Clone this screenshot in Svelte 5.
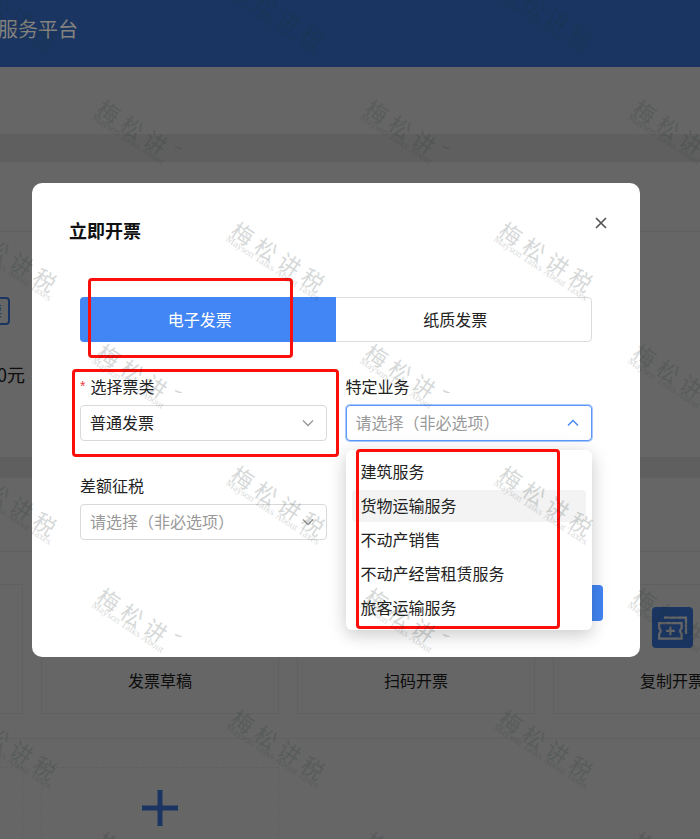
<script>
  let tab = $state('e');
  let kind = $state('普通发票');
  let business = $state('');
  let margin = $state('');

  const services = ['建筑服务', '货物运输服务', '不动产销售', '不动产经营租赁服务', '旅客运输服务'];
  const shortcuts = ['批量开票', '发票草稿', '扫码开票', '复制开票'];

  const marks = [];
  for (let row = 1; row < 9; row++) {
    for (let col = 1; col < 7; col++) {
      if ((row + col) % 2 === 0) {
        marks.push({ x: col * 134 - 162, y: row * 122 - 148, cut: row % 2 === 0 });
      }
    }
  }
</script>

{#snippet chevron(up)}
  <svg class="chevron" class:up viewBox="0 0 12 8" width="12" height="8" aria-hidden="true">
    <path d="M1 1.5 L6 6.5 L11 1.5" fill="none" stroke="currentColor" stroke-width="1.4" />
  </svg>
{/snippet}

{#snippet ticket()}
  <svg viewBox="0 0 41 41" width="41" height="41" aria-hidden="true">
    <g fill="none" stroke="currentColor" stroke-width="2.2">
      <path d="M12 10.6 H34 V27" />
      <path d="M7.2 16.2 H29.6 V21.2 Q26.6 24 29.6 26.8 V31.6 H7.2 V26.8 Q10.2 24 7.2 21.2 Z" />
      <path d="M18.4 19.6 V28.2 M14.1 23.9 H22.7" />
    </g>
  </svg>
{/snippet}

<div class="app">
  <header><span>服务平台</span></header>
  <div class="crumbs"></div>

  <section class="summary">
    <div class="bar"></div>
    <div class="figures">
      <button class="outline">去开票</button>
      <p>0元</p>
    </div>
  </section>

  <section class="work">
    <div class="bar tall"></div>
    <div class="cards">
      {#each shortcuts as name}
        <a class="card" href="#shortcut"><span class="icon">{@render ticket()}</span>{name}</a>
      {/each}
    </div>
    <div class="cards more">
      <div class="card dashed"></div>
      <button class="card dashed" aria-label="添加">
        <svg viewBox="0 0 36 36" width="36" height="36"><path d="M18 0 V36 M0 18 H36" stroke="currentColor" stroke-width="5" /></svg>
      </button>
    </div>
  </section>

  <div class="mask">
    <div class="modal" role="dialog" aria-modal="true" aria-labelledby="dlg-title">
      <div class="head">
        <h2 id="dlg-title">立即开票</h2>
        <button class="close" aria-label="关闭">
          <svg viewBox="0 0 12 12" width="12" height="12"><path d="M1 1 L11 11 M11 1 L1 11" stroke="currentColor" stroke-width="1.7" /></svg>
        </button>
      </div>

      <div class="body">
        <div class="tabs">
          <button class:active={tab === 'e'} onclick={() => (tab = 'e')}>电子发票</button>
          <button class:active={tab === 'p'} onclick={() => (tab = 'p')}>纸质发票</button>
        </div>

        <div class="fields">
          <div class="field">
            <label for="kind"><i>*</i>选择票类</label>
            <div class="box">
              <select id="kind" bind:value={kind}>
                <option>普通发票</option>
              </select>
              {@render chevron(false)}
            </div>
          </div>
          <div class="field">
            <label for="business">特定业务</label>
            <div class="box open">
              <select id="business" class="empty" bind:value={business}>
                <option value="">请选择（非必选项）</option>
              </select>
              {@render chevron(true)}
              <div class="menu">
                {#each services as name, i}
                  <button class:hover={i === 1}>{name}</button>
                {/each}
              </div>
            </div>
          </div>
          <div class="field">
            <label for="margin">差额征税</label>
            <div class="box">
              <select id="margin" class="empty" bind:value={margin}>
                <option value="">请选择（非必选项）</option>
              </select>
              {@render chevron(false)}
            </div>
          </div>
        </div>
      </div>

      <div class="foot"><button class="primary" aria-label="确定"></button></div>

      <div class="frame f1"></div>
      <div class="frame f2"></div>
      <div class="frame f3"></div>
    </div>
  </div>

  <div class="marks" aria-hidden="true">
    {#each marks as m}
      <div class="mark" class:cut={m.cut} style="left:{m.x}px;top:{m.y}px">
        <div class="turn">
          <div class="cn"><span>梅</span><span>松</span><span>讲</span><span>税</span></div>
          <div class="en"><span>Mayson</span><span>Talks</span><span>About</span><span>Taxes</span></div>
        </div>
      </div>
    {/each}
  </div>
</div>

<style>
  :global(body) { margin: 0; }
  .app {
    position: relative;
    height: 100vh;
    overflow: hidden;
    background: #eee;
    color: #222;
    font: 16px/24px "Noto Sans CJK SC", sans-serif;
  }
  .app * { box-sizing: border-box; }
  button, select { font: inherit; color: inherit; margin: 0; padding: 0; border: 0; background: none; }
  svg { display: block; }

  header {
    display: flex;
    align-items: center;
    height: 67px;
    padding-bottom: 10px;
    background: #4285f4;
    font-size: 20px;
  }
  header span { position: relative; z-index: 2; margin-left: -2px; color: #85837d; }
  .crumbs { height: 67px; background: #fff; }

  .summary { height: 295px; margin-top: 28px; background: #fff; }
  .bar { height: 70px; border-bottom: 1px solid #f0f0f0; }
  .tall { height: 74px; }
  .figures { padding-top: 65px; margin-left: -45px; }
  .figures p { margin: 37px 0 0; width: 70px; text-align: right; font-size: 18px; }
  .outline {
    display: block;
    width: 55px;
    height: 28px;
    border: 2px solid #4285f4;
    border-radius: 4px;
    color: #4285f4;
    font-size: 13px;
  }

  .work { margin-top: 21px; background: #fff; }
  .cards { display: flex; gap: 18px; margin-left: -215px; padding: 32px 0 24px; }
  .card {
    flex: none;
    display: flex;
    flex-direction: column;
    align-items: center;
    width: 238px;
    height: 130px;
    padding-top: 22px;
    border: 1px solid #f0f0f0;
    color: #222;
    text-decoration: none;
  }
  .icon { margin-bottom: 20px; border-radius: 4px; background: #4285f4; color: #fff; }
  .more { border-top: 1px solid #f0f0f0; padding-top: 28px; }
  .dashed { border: 1px dashed #f0f0f0; color: #4285f4; }

  .mask {
    position: absolute;
    inset: 0;
    padding: 183px 60px 0 32px;
    background: rgba(0, 0, 0, 0.6);
  }
  .modal { position: relative; padding-bottom: 36px; border-radius: 10px; background: #fff; }
  .head { display: flex; justify-content: space-between; padding: 34px 33px 0 37px; }
  h2 { margin: 0; font-size: 18px; line-height: 26px; font-weight: 700; color: #111; }
  .close { width: 12px; height: 12px; color: #555; }

  .body { padding: 54px 48px 0; }
  .tabs { display: flex; height: 45px; border: 1px solid #dcdcdc; border-radius: 4px; }
  .tabs button { flex: 1; padding: 0 16px 2px 0; }
  .tabs .active {
    margin: -1px 0 -1px -1px;
    border-radius: 4px 0 0 4px;
    background: #4285f4;
    color: #fff;
  }

  .fields { display: grid; grid-template-columns: 1fr 1fr; gap: 33px 19px; padding-top: 33px; }
  label { display: flex; height: 22px; margin-bottom: 8px; line-height: 22px; }
  label i { margin-right: 5px; font: 14px/22px "Liberation Sans", sans-serif; color: #f23c3c; }
  .box { position: relative; display: flex; align-items: center; }
  select {
    width: 100%;
    height: 36px;
    padding: 0 32px 2px 9px;
    border: 1px solid #d9d9d9;
    border-radius: 4px;
    appearance: none;
    background: #fff;
  }
  .empty { color: #999; }
  .open select { border-color: #5b98f8; box-shadow: 0 0 0 1px #a9c9fc; }
  .chevron { position: absolute; right: 13px; color: #999; pointer-events: none; }
  .up { transform: rotate(180deg); color: #4285f4; }

  .menu {
    position: absolute;
    top: 45px;
    left: 0;
    right: 0;
    z-index: 1;
    display: flex;
    flex-direction: column;
    gap: 2px;
    padding: 6px;
    border-radius: 6px;
    background: #fff;
    box-shadow: 0 6px 16px rgba(0, 0, 0, 0.12), 0 2px 22px rgba(0, 0, 0, 0.1);
  }
  .menu button { height: 32px; padding: 0 0 2px 9px; border-radius: 4px; text-align: left; }
  .menu .hover { background: #f3f3f3; }

  .foot { display: flex; justify-content: flex-end; padding: 45px 37px 0; }
  .primary { width: 80px; height: 36px; border-radius: 4px; background: #4285f4; }

  .frame { position: absolute; z-index: 2; border: 3px solid #fa0f0a; border-radius: 4px; pointer-events: none; }
  .f1 { left: 56px; top: 95px; width: 205px; height: 80px; }
  .f2 { left: 40px; top: 186px; width: 267px; height: 88px; }
  .f3 { left: 324px; top: 266px; width: 204px; height: 180px; }

  .marks { position: absolute; inset: 0; z-index: 3; overflow: hidden; pointer-events: none; color: rgb(30, 48, 46); opacity: 0.18; }
  .mark { position: absolute; width: 120px; height: 100px; }
  .cut { clip-path: polygon(-30px -10px, 110px -10px, 110px 53px, 58px 53px, 58px 100px, -30px 100px); }
  .turn { width: 110px; transform: rotate(33.5deg); transform-origin: 0 0; }
  .cn { display: flex; gap: 6px; font-size: 22px; line-height: 20px; }
  .en { display: flex; justify-content: space-between; font: 10px/8px "Liberation Serif", serif; }
</style>
